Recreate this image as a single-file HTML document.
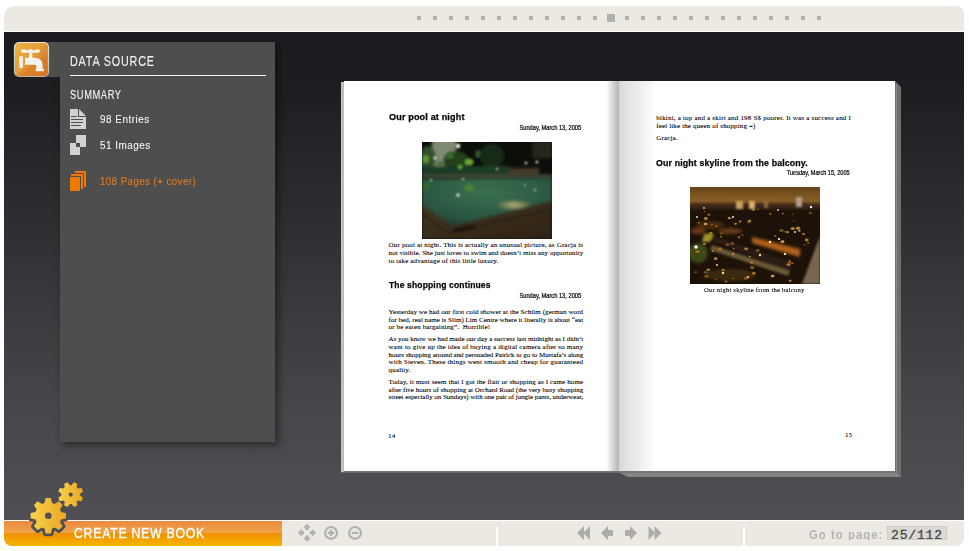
<!DOCTYPE html>
<html><head><meta charset="utf-8">
<style>
*{margin:0;padding:0;box-sizing:border-box}
html,body{width:969px;height:551px;overflow:hidden;background:#fff;font-family:"Liberation Sans",sans-serif}
.abs{position:absolute}
#topbar{left:4px;top:6px;width:960px;height:25px;background:#ece9e2;border-radius:10px 8px 0 0}
#main{left:4px;top:32px;width:960px;height:488px;background:linear-gradient(#1c1c20 0%,#1e1e22 12%,#2f2f33 40%,#45454a 75%,#504f54 100%)}
#botbar{left:4px;top:521px;width:960px;height:25px;background:#ece9e2;border-radius:0 0 8px 8px}
#orange{left:4px;top:521px;width:278px;height:25px;border-radius:0 0 0 8px;background:linear-gradient(#eb893e 0%,#f0a448 46%,#ef9002 50%,#f6b600 100%)}
.dot{position:absolute;top:16px;width:4px;height:4px;background:#b0b0b0}
#panel{left:60px;top:42px;width:215px;height:400px;background:#4e4e4e;box-shadow:3px 3px 8px rgba(0,0,0,.45)}
#paneltab{left:34px;top:42px;width:30px;height:35px;background:#4e4e4e}
#icon{left:14px;top:42px;width:35px;height:35px;border-radius:5px;border:1px solid #c9c4bd;background:linear-gradient(135deg,#e9b23c 0%,#e39634 45%,#dc7e22 55%,#d6711c 100%)}
.ptxt{position:absolute;color:#f2f2f2;white-space:nowrap;-webkit-text-stroke:0.12px currentColor}
.bl{position:absolute;white-space:nowrap}
</style></head><body>
<div id="topbar" class="abs"></div>
<div id="main" class="abs"></div>

<div id="panel" class="abs"></div>
<div id="paneltab" class="abs"></div>

<div class="ptxt" style="left:70px;top:52.5px;font-size:15.4px;line-height:15.4px;letter-spacing:1.2px;transform:scaleX(0.7);transform-origin:0 0">DATA SOURCE</div>
<div class="abs" style="left:70px;top:74.8px;width:196px;height:1.5px;background:#f4f4f4"></div>
<div class="ptxt" style="left:70px;top:88.7px;font-size:12.6px;line-height:12.6px;letter-spacing:0.8px;transform:scaleX(0.74);transform-origin:0 0">SUMMARY</div>
<div class="ptxt" style="left:100px;top:113.8px;font-size:11.8px;line-height:11.8px;letter-spacing:0.6px;transform:scaleX(0.84);transform-origin:0 0">98 Entries</div>
<div class="ptxt" style="left:100px;top:139.6px;font-size:11.8px;line-height:11.8px;letter-spacing:0.6px;transform:scaleX(0.84);transform-origin:0 0">51 Images</div>
<div class="ptxt" style="left:100px;top:175.6px;font-size:11.8px;line-height:11.8px;letter-spacing:0.6px;transform:scaleX(0.815);transform-origin:0 0;color:#e07a20">108 Pages (+ cover)</div>

<svg class="abs" style="left:0;top:0" width="969" height="551" viewBox="0 0 969 551">
 <!-- faucet -->
 <defs>
  <linearGradient id="ig" x1="0" y1="0" x2="1" y2="1"><stop offset="0" stop-color="#ebb443"/><stop offset="0.5" stop-color="#e39a36"/><stop offset="0.5" stop-color="#dc8a2c"/><stop offset="1" stop-color="#d46f1e"/></linearGradient>
  <linearGradient id="ib" x1="0" y1="0" x2="0" y2="1"><stop offset="0" stop-color="#e8e4de"/><stop offset="1" stop-color="#b9b4ae"/></linearGradient>
 </defs>
 <rect x="14.5" y="42.5" width="34" height="34" rx="4.5" fill="url(#ig)" stroke="url(#ib)" stroke-width="1.2"/>
 <path d="M15.5,70 L48,46 L48,52 L20,75.5 L15.5,75.5Z" fill="#fff" opacity="0.06"/>
 <g fill="#f3f1ee">
  <path d="M21,51 Q21,49 23,49.3 L28.5,50.2 Q30.6,47.6 32.7,50.2 L38,49.3 Q40,49 40,51 Q40,53 38,52.7 L23,52.7 Q21,53 21,51Z"/>
  <rect x="29" y="52" width="3.3" height="6.5"/>
  <path d="M25,57.8 H34.5 Q42.6,57.8 42.6,65.5 V69 H44 V71.3 H35.6 V69 H36.3 V66.2 Q36.3,64.7 34.8,64.7 H25Z"/>
  <rect x="19.3" y="56.3" width="3.6" height="11.7"/>
 </g>
<!-- entries -->
 <path fill="#d2d2d2" d="M70 109 H78 V117 H86 V129 H70 Z"/>
 <path fill="#d2d2d2" d="M79 109 L86 116 H79 Z"/>
 <g fill="#4e4e4e">
  <rect x="71" y="116" width="6" height="1"/>
  <rect x="71" y="119" width="12" height="1"/>
  <rect x="71" y="122" width="12" height="1"/>
  <rect x="71" y="125" width="10" height="1"/>
 </g>
 <!-- images -->
 <path fill="#d2d2d2" fill-rule="evenodd" d="M76 135 H86 V147 H76 Z M70 143 H80 V155 H70 Z"/>
 <rect x="76" y="143" width="4" height="4" fill="#4e4e4e"/>
 <!-- pages -->
 <g fill="#f07800">
  <rect x="70" y="177" width="10" height="14"/>
  <path d="M71 174 H83 V189 H81 V176 H71 Z"/>
  <path d="M75 171 H86 V187 H84 V173 H75 Z"/>
 </g>
</svg>
<!--TOPDOTS--><div class="dot" style="left:417px"></div><div class="dot" style="left:433px"></div><div class="dot" style="left:449px"></div><div class="dot" style="left:465px"></div><div class="dot" style="left:481px"></div><div class="dot" style="left:497px"></div><div class="dot" style="left:513px"></div><div class="dot" style="left:529px"></div><div class="dot" style="left:545px"></div><div class="dot" style="left:561px"></div><div class="dot" style="left:577px"></div><div class="dot" style="left:593px"></div><div class="dot" style="left:625px"></div><div class="dot" style="left:641px"></div><div class="dot" style="left:657px"></div><div class="dot" style="left:673px"></div><div class="dot" style="left:689px"></div><div class="dot" style="left:705px"></div><div class="dot" style="left:721px"></div><div class="dot" style="left:737px"></div><div class="dot" style="left:753px"></div><div class="dot" style="left:769px"></div><div class="dot" style="left:785px"></div><div class="dot" style="left:801px"></div><div class="dot" style="left:817px"></div><div class="dot" style="left:607px;top:14px;width:8px;height:8px"></div><!--/TOPDOTS-->
<!--BOOK--><svg class="abs" style="left:0;top:0" width="969" height="551" viewBox="0 0 969 551">
 <polygon points="895,81 901,87 901,477 895,471" fill="#6e6e6e"/>
 <polygon points="896,84 897,85 897,472 896,471" fill="#8a8a8a"/>
 <polygon points="616,471 895,471 901,477 628,477" fill="#858585"/>
 <polygon points="619,471 895,471 897,473 621,473" fill="#767676"/>
</svg>
<div class="abs" style="left:341px;top:471px;width:278px;height:2px;background:linear-gradient(#7a7a7a,#646464)"></div>
<div class="abs" style="left:341px;top:82px;width:3px;height:390px;background:linear-gradient(90deg,#c6c6c6,#b8b8b8)"></div>
<div class="abs" style="left:344px;top:81px;width:275px;height:390px;background:linear-gradient(90deg,#fff 0,#fff 262px,#dcdcdc 268px,#c2c2c2 272px,#b4b4b4 275px)"></div>
<div class="abs" style="left:619px;top:81px;width:276px;height:390px;background:linear-gradient(90deg,#d6d6d6 0,#dedede 4px,#e6e6e6 12px,#efefef 22px,#f8f8f8 31px,#fff 37px)"></div>
<svg class="abs" style="left:421.5px;top:141.8px" width="130" height="97" viewBox="0 0 130 97">
 <defs>
  <filter id="b1" x="-20%" y="-20%" width="140%" height="140%"><feGaussianBlur stdDeviation="1.5"/></filter>
  <filter id="b6" x="-20%" y="-20%" width="140%" height="140%"><feGaussianBlur stdDeviation="0.8"/></filter>
  <filter id="b2" x="-50%" y="-50%" width="200%" height="200%"><feGaussianBlur stdDeviation="0.8"/></filter>
  <radialGradient id="wg" cx="0.5" cy="0.3" r="0.8"><stop offset="0" stop-color="#3a7050"/><stop offset="0.7" stop-color="#285440"/><stop offset="1" stop-color="#1a3a2a"/></radialGradient>
  <radialGradient id="glow"><stop offset="0" stop-color="#d0c080" stop-opacity="0.9"/><stop offset="0.6" stop-color="#a09a60" stop-opacity="0.5"/><stop offset="1" stop-color="#607050" stop-opacity="0"/></radialGradient>
  <linearGradient id="dk" x1="0" y1="0" x2="1" y2="1"><stop offset="0" stop-color="#433620"/><stop offset="1" stop-color="#2e2214"/></linearGradient>
 </defs>
 <rect width="130" height="97" fill="#0c0e0a"/>
 <g filter="url(#b1)">
  <rect x="10" y="-2" width="24" height="28" fill="#7e8a72"/>
  <ellipse cx="6" cy="16" rx="8" ry="12" fill="#30502a"/>
  <ellipse cx="34" cy="19" rx="13" ry="10" fill="#24401e"/>
  <ellipse cx="70" cy="14" rx="12" ry="12" fill="#182a14"/>
  <rect x="110" y="0" width="20" height="16" fill="#26261e"/>
  <rect x="0" y="24" width="87" height="9" fill="#1e3a26"/>
  <rect x="87" y="26" width="30" height="7" fill="#45382a"/>
  <rect x="0" y="32" width="130" height="5" fill="#3e4230"/>
 </g>
 <g filter="url(#b6)">
  <ellipse cx="4" cy="17" rx="3" ry="4" fill="#5a9a36"/>
  <ellipse cx="47" cy="20" rx="4.5" ry="3.5" fill="#64a634"/>
  <ellipse cx="38" cy="25" rx="2.5" ry="2.5" fill="#5aa036"/>
  <ellipse cx="28" cy="14" rx="4" ry="3" fill="#3c6a2c"/>
  <ellipse cx="56" cy="12" rx="3" ry="4" fill="#2e5426"/>
  <ellipse cx="18" cy="22" rx="3" ry="2" fill="#3a6a2a"/>
 </g>
 <g filter="url(#b1)">
  <polygon points="0,37 130,36 130,59 31,84 0,63" fill="url(#wg)"/>
  <ellipse cx="47" cy="46" rx="5" ry="3.5" fill="#4e8a34" opacity="0.85"/><ellipse cx="4" cy="44" rx="4" ry="4" fill="#3a6a30" opacity="0.8"/><ellipse cx="60" cy="40" rx="30" ry="3" fill="#3a6a40" opacity="0.5"/>
  <ellipse cx="92" cy="63" rx="20" ry="6" fill="url(#glow)"/>
  <polygon points="0,63 31,84 130,59 130,97 0,97" fill="url(#dk)"/>
  <polygon points="0,71 27,90 130,66 130,68 28,93 0,74" fill="#241a0e" opacity="0.6"/>
 </g>
 <g fill="#fffbe8" filter="url(#b2)">
  <circle cx="36" cy="4" r="2.3"/><circle cx="13" cy="16" r="1.5"/><circle cx="36" cy="53" r="1.6"/>
  <circle cx="104" cy="21" r="1.2"/><circle cx="115" cy="20" r="1.3"/><circle cx="75" cy="27" r="1"/><circle cx="9" cy="38" r="1"/><circle cx="41" cy="37" r="1"/><circle cx="103" cy="43" r="0.8"/><circle cx="113" cy="48" r="0.9"/>
 </g>
 <g fill="#1a140c" filter="url(#b2)"><rect x="31" y="85" width="22" height="3" transform="rotate(-12 42 86)"/></g>
</svg>
<svg class="abs" style="left:690.2px;top:187px" width="130" height="97" viewBox="0 0 130 97">
 <defs>
  <filter id="b3" x="-20%" y="-20%" width="140%" height="140%"><feGaussianBlur stdDeviation="1.6"/></filter>
  <filter id="b5" x="-20%" y="-20%" width="140%" height="140%"><feGaussianBlur stdDeviation="1.1"/></filter>
  <filter id="b4" x="-50%" y="-50%" width="200%" height="200%"><feGaussianBlur stdDeviation="0.7"/></filter>
  <linearGradient id="sky" x1="0" y1="0" x2="0" y2="1"><stop offset="0" stop-color="#664519"/><stop offset="0.7" stop-color="#8a5e24"/><stop offset="1" stop-color="#3a2812"/></linearGradient>
 </defs>
 <rect width="130" height="97" fill="#1c1208"/>
 <rect width="130" height="20" fill="url(#sky)"/>
 <g filter="url(#b3)">
  <rect x="0" y="17" width="130" height="5" fill="#3a2812"/>
  <ellipse cx="20" cy="38" rx="14" ry="4" fill="#4a2a10"/>
  <ellipse cx="40" cy="44" rx="12" ry="3" fill="#6a3a12"/>
  <ellipse cx="8" cy="44" rx="8" ry="3" fill="#6a3812"/>
  <polygon points="62,50 110,62 110,70 62,56" fill="#b0601c"/>
  <ellipse cx="8" cy="66" rx="10" ry="10" fill="#3e4a18"/>
  <ellipse cx="40" cy="88" rx="26" ry="6" fill="#3a2a10"/>
 </g>
 <g filter="url(#b5)">
  <rect x="46" y="14" width="7" height="8" fill="#c8a060"/>
  <rect x="59" y="14" width="6" height="8" fill="#d8b070"/>
  <rect x="74" y="12" width="4" height="9" fill="#8a6a3a"/>
  <rect x="106" y="10" width="6" height="10" fill="#b0a090"/>
  <polygon points="13,50 24,49 105,76 100,84" fill="#2a1a12"/>
  <polygon points="22,58 100,84 98,89 20,63" fill="#6a5a34"/>
  <polygon points="14,47 24,46 20,55 12,55" fill="#a0902a"/>
  <polygon points="130,49 130,97 112,97" fill="#7a6650"/>
 </g>
 <g filter="url(#b4)" opacity="0.8"><ellipse cx="40.5" cy="31.5" rx="0.9" ry="0.6" fill="#f0c060"/><ellipse cx="102.7" cy="27.2" rx="0.9" ry="0.7" fill="#806030"/><ellipse cx="63.4" cy="22.8" rx="1.4" ry="1.0" fill="#d0a040"/><ellipse cx="30.1" cy="61.9" rx="2.0" ry="1.4" fill="#c07020"/><ellipse cx="15.5" cy="37.0" rx="1.7" ry="1.2" fill="#f0c060"/><ellipse cx="7.7" cy="64.5" rx="2.2" ry="1.6" fill="#c07020"/><ellipse cx="5.8" cy="85.2" rx="1.4" ry="1.0" fill="#a05a18"/><ellipse cx="67.6" cy="63.4" rx="2.0" ry="1.4" fill="#806030"/><ellipse cx="22.6" cy="64.2" rx="1.1" ry="0.8" fill="#f0c060"/><ellipse cx="12.2" cy="74.1" rx="0.9" ry="0.7" fill="#806030"/><ellipse cx="25.7" cy="71.7" rx="1.9" ry="1.4" fill="#d0a040"/><ellipse cx="58.2" cy="90.2" rx="1.3" ry="0.9" fill="#a05a18"/><ellipse cx="99.3" cy="73.1" rx="1.0" ry="0.7" fill="#e09030"/><ellipse cx="37.5" cy="57.6" rx="1.9" ry="1.3" fill="#a05a18"/><ellipse cx="36.0" cy="94.5" rx="1.6" ry="1.1" fill="#c07020"/><ellipse cx="20.6" cy="46.0" rx="1.4" ry="1.0" fill="#d0a040"/><ellipse cx="120.3" cy="25.9" rx="1.6" ry="1.2" fill="#806030"/><ellipse cx="109.4" cy="43.8" rx="1.3" ry="1.0" fill="#f0c060"/><ellipse cx="62.1" cy="80.6" rx="2.0" ry="1.4" fill="#c07020"/><ellipse cx="118.1" cy="56.0" rx="0.9" ry="0.7" fill="#f0c060"/><ellipse cx="91.4" cy="43.5" rx="2.2" ry="1.6" fill="#806030"/><ellipse cx="102.7" cy="41.6" rx="2.1" ry="1.5" fill="#d0a040"/><ellipse cx="43.4" cy="91.5" rx="1.1" ry="0.8" fill="#a05a18"/><ellipse cx="14.6" cy="24.5" rx="1.0" ry="0.7" fill="#a05a18"/><ellipse cx="31.0" cy="49.7" rx="1.0" ry="0.7" fill="#d0a040"/><ellipse cx="56.1" cy="61.8" rx="2.0" ry="1.4" fill="#e09030"/><ellipse cx="108.0" cy="41.2" rx="2.2" ry="1.6" fill="#d0a040"/><ellipse cx="85.3" cy="48.9" rx="1.1" ry="0.8" fill="#e09030"/><ellipse cx="22.0" cy="37.6" rx="0.9" ry="0.6" fill="#e09030"/><ellipse cx="103.9" cy="33.9" rx="0.8" ry="0.6" fill="#a05a18"/><ellipse cx="52.4" cy="48.1" rx="1.3" ry="0.9" fill="#806030"/><ellipse cx="15.7" cy="85.3" rx="1.8" ry="1.3" fill="#806030"/><ellipse cx="92.5" cy="54.7" rx="2.0" ry="1.4" fill="#f0c060"/><ellipse cx="49.0" cy="50.3" rx="1.5" ry="1.1" fill="#c07020"/><ellipse cx="50.1" cy="34.5" rx="1.5" ry="1.0" fill="#e09030"/><ellipse cx="13.7" cy="65.7" rx="0.8" ry="0.6" fill="#c07020"/><ellipse cx="18.9" cy="27.7" rx="1.7" ry="1.2" fill="#a05a18"/><ellipse cx="8.8" cy="35.8" rx="1.0" ry="0.7" fill="#d0a040"/><ellipse cx="31.5" cy="46.4" rx="1.5" ry="1.1" fill="#a05a18"/><ellipse cx="14.4" cy="57.1" rx="1.5" ry="1.1" fill="#d0a040"/><ellipse cx="39.0" cy="31.0" rx="1.3" ry="0.9" fill="#f0c060"/><ellipse cx="33.1" cy="83.0" rx="1.6" ry="1.1" fill="#e09030"/><ellipse cx="25.7" cy="92.4" rx="1.0" ry="0.7" fill="#a05a18"/><ellipse cx="67.9" cy="22.1" rx="1.3" ry="0.9" fill="#806030"/><ellipse cx="80.4" cy="26.9" rx="1.6" ry="1.1" fill="#a05a18"/><ellipse cx="113.5" cy="47.0" rx="1.6" ry="1.1" fill="#e09030"/><ellipse cx="97.4" cy="45.1" rx="1.7" ry="1.2" fill="#e09030"/><ellipse cx="98.5" cy="77.6" rx="2.0" ry="1.4" fill="#e09030"/><ellipse cx="102.3" cy="76.2" rx="1.1" ry="0.8" fill="#e09030"/><ellipse cx="61.6" cy="75.6" rx="1.9" ry="1.4" fill="#c07020"/><ellipse cx="59.0" cy="34.7" rx="2.2" ry="1.6" fill="#806030"/><ellipse cx="55.9" cy="91.2" rx="2.2" ry="1.6" fill="#a05a18"/><ellipse cx="45.6" cy="36.8" rx="1.5" ry="1.1" fill="#e09030"/><ellipse cx="42.2" cy="56.7" rx="2.0" ry="1.4" fill="#806030"/><ellipse cx="59.9" cy="69.6" rx="1.0" ry="0.7" fill="#f0c060"/><ellipse cx="82.6" cy="89.1" rx="1.9" ry="1.4" fill="#f0c060"/><ellipse cx="59.8" cy="33.6" rx="1.3" ry="0.9" fill="#f0c060"/><ellipse cx="100.1" cy="93.8" rx="1.5" ry="1.1" fill="#d0a040"/><ellipse cx="92.9" cy="26.5" rx="1.1" ry="0.8" fill="#e09030"/><ellipse cx="15.9" cy="31.5" rx="2.0" ry="1.4" fill="#d0a040"/><ellipse cx="18.3" cy="82.8" rx="1.8" ry="1.3" fill="#d0a040"/><ellipse cx="43.8" cy="61.7" rx="0.9" ry="0.6" fill="#e09030"/><ellipse cx="99.9" cy="75.2" rx="1.6" ry="1.1" fill="#c07020"/><ellipse cx="116.7" cy="53.0" rx="2.0" ry="1.4" fill="#e09030"/><ellipse cx="26.4" cy="39.1" rx="1.5" ry="1.1" fill="#a05a18"/><ellipse cx="95.5" cy="44.8" rx="1.4" ry="1.0" fill="#806030"/><ellipse cx="16.4" cy="89.2" rx="2.1" ry="1.5" fill="#a05a18"/><ellipse cx="82.8" cy="81.9" rx="1.4" ry="1.0" fill="#806030"/><ellipse cx="114.7" cy="58.1" rx="1.1" ry="0.8" fill="#806030"/><ellipse cx="63.8" cy="86.3" rx="1.7" ry="1.2" fill="#e09030"/></g>
<g fill="#ffd890" filter="url(#b4)">
  <circle cx="6" cy="60" r="1.8" fill="#fff"/><circle cx="43" cy="30" r="1.1"/><circle cx="70" cy="68" r="1.2"/><circle cx="95" cy="67" r="1.2"/>
  <circle cx="7" cy="30" r="1" fill="#ddd"/><circle cx="14" cy="21" r="0.9" fill="#ccd"/><circle cx="80" cy="55" r="1.3"/><circle cx="89" cy="52" r="1.1" fill="#fff"/><circle cx="105" cy="45" r="1" fill="#dde"/><circle cx="121" cy="20" r="1.2" fill="#eef"/><circle cx="88" cy="23" r="1" fill="#ccd"/>
  <circle cx="43" cy="67" r="1.2" fill="#e07060"/><circle cx="27" cy="78" r="1"/><circle cx="33" cy="86" r="1.2"/><circle cx="58" cy="90" r="1"/>
 </g>
</svg>
<div class="bl" style="top:112.34px;font:bold 9.4px/9.4px 'Liberation Sans';color:#000;left:388.60px;letter-spacing:0.150px;transform:scaleX(0.9678);transform-origin:0 0;-webkit-text-stroke:0.25px #000;">Our pool at night</div>
<div class="bl" style="top:241.90px;font:normal 7.05px/7.05px 'Liberation Serif';color:#000;left:388.60px;letter-spacing:0.147px;-webkit-text-stroke:0.08px #000;">Our pool at night. This is actually an unusual picture, as Gracja is</div>
<div class="bl" style="top:249.70px;font:normal 7.05px/7.05px 'Liberation Serif';color:#000;left:388.60px;letter-spacing:0.037px;-webkit-text-stroke:0.08px #000;">not visible. She just loves to swim and doesn’t miss any opportunity</div>
<div class="bl" style="top:257.50px;font:normal 7.05px/7.05px 'Liberation Serif';color:#000;left:388.60px;letter-spacing:0.120px;-webkit-text-stroke:0.08px #000;">to take advantage of this little luxury.</div>
<div class="bl" style="top:280.04px;font:bold 9.4px/9.4px 'Liberation Sans';color:#000;left:388.60px;letter-spacing:0.150px;transform:scaleX(0.9104);transform-origin:0 0;-webkit-text-stroke:0.25px #000;">The shopping continues</div>
<div class="bl" style="top:309.30px;font:normal 7.05px/7.05px 'Liberation Serif';color:#000;left:388.60px;letter-spacing:0.063px;-webkit-text-stroke:0.08px #000;">Yesterday we had our first cold shower at the Schlim (german word</div>
<div class="bl" style="top:316.80px;font:normal 7.05px/7.05px 'Liberation Serif';color:#000;left:388.60px;letter-spacing:0.001px;-webkit-text-stroke:0.08px #000;">for bed, real name is Slim) Lim Centre where it literally is about “eat</div>
<div class="bl" style="top:324.40px;font:normal 7.05px/7.05px 'Liberation Serif';color:#000;left:388.60px;letter-spacing:0.120px;-webkit-text-stroke:0.08px #000;">or be eaten bargaining”. &nbsp;Horrible!</div>
<div class="bl" style="top:336.20px;font:normal 7.05px/7.05px 'Liberation Serif';color:#000;left:388.60px;letter-spacing:-0.026px;-webkit-text-stroke:0.08px #000;">As you know we had made our day a success last midnight as I didn’t</div>
<div class="bl" style="top:344.00px;font:normal 7.05px/7.05px 'Liberation Serif';color:#000;left:388.60px;letter-spacing:0.173px;-webkit-text-stroke:0.08px #000;">want to give up the idea of buying a digital camera after so many</div>
<div class="bl" style="top:351.60px;font:normal 7.05px/7.05px 'Liberation Serif';color:#000;left:388.60px;letter-spacing:-0.062px;-webkit-text-stroke:0.08px #000;">hours shopping around and persuaded Patrick to go to Mustafa’s along</div>
<div class="bl" style="top:359.40px;font:normal 7.05px/7.05px 'Liberation Serif';color:#000;left:388.60px;letter-spacing:0.180px;-webkit-text-stroke:0.08px #000;">with Steven. These things went smooth and cheap for guaranteed</div>
<div class="bl" style="top:367.10px;font:normal 7.05px/7.05px 'Liberation Serif';color:#000;left:388.60px;letter-spacing:0.120px;-webkit-text-stroke:0.08px #000;">quality.</div>
<div class="bl" style="top:379.20px;font:normal 7.05px/7.05px 'Liberation Serif';color:#000;left:388.60px;letter-spacing:0.094px;-webkit-text-stroke:0.08px #000;">Today, it must seem that I got the flair or shopping as I came home</div>
<div class="bl" style="top:386.70px;font:normal 7.05px/7.05px 'Liberation Serif';color:#000;left:388.60px;letter-spacing:-0.025px;-webkit-text-stroke:0.08px #000;">after five hours of shopping at Orchard Road (the very busy shopping</div>
<div class="bl" style="top:394.30px;font:normal 7.05px/7.05px 'Liberation Serif';color:#000;left:388.60px;letter-spacing:-0.067px;-webkit-text-stroke:0.08px #000;">street especially on Sundays) with one pair of jungle pants, underwear,</div>
<div class="bl" style="top:432.50px;font:normal 7.05px/7.05px 'Liberation Serif';color:#000;left:388.00px;letter-spacing:0.120px;-webkit-text-stroke:0.08px #000;">14</div>
<div class="bl" style="top:114.90px;font:normal 7.05px/7.05px 'Liberation Serif';color:#000;left:656.30px;letter-spacing:0.181px;-webkit-text-stroke:0.08px #000;">bikini, a top and a skirt and 198 S$ poorer. It was a success and I</div>
<div class="bl" style="top:122.60px;font:normal 7.05px/7.05px 'Liberation Serif';color:#000;left:656.30px;letter-spacing:0.120px;-webkit-text-stroke:0.08px #000;">feel like the queen of shopping =)</div>
<div class="bl" style="top:134.90px;font:normal 7.05px/7.05px 'Liberation Serif';color:#000;left:656.30px;letter-spacing:0.120px;-webkit-text-stroke:0.08px #000;">Gracja.</div>
<div class="bl" style="top:158.34px;font:bold 9.4px/9.4px 'Liberation Sans';color:#000;left:656.30px;letter-spacing:0.150px;transform:scaleX(0.9380);transform-origin:0 0;-webkit-text-stroke:0.25px #000;">Our night skyline from the balcony.</div>
<div class="bl" style="top:286.90px;font:normal 7.05px/7.05px 'Liberation Serif';color:#000;left:704.40px;letter-spacing:0.200px;transform:scaleX(0.9477);transform-origin:0 0;-webkit-text-stroke:0.08px #000;">Our night skyline from the balcony</div>
<div class="bl" style="top:431.90px;font:normal 7.05px/7.05px 'Liberation Serif';color:#000;left:845.00px;letter-spacing:0.120px;-webkit-text-stroke:0.08px #000;">15</div>
<div class="bl" style="top:124.97px;font:normal 6.3px/6.3px 'Liberation Sans';color:#000;right:388.30px;transform:scaleX(0.9053);transform-origin:100% 0;-webkit-text-stroke:0.2px #000;">Sunday, March 13, 2005</div>
<div class="bl" style="top:292.97px;font:normal 6.3px/6.3px 'Liberation Sans';color:#000;right:388.30px;transform:scaleX(0.9053);transform-origin:100% 0;-webkit-text-stroke:0.2px #000;">Sunday, March 13, 2005</div>
<div class="bl" style="top:169.97px;font:normal 6.3px/6.3px 'Liberation Sans';color:#000;right:119.00px;transform:scaleX(0.8909);transform-origin:100% 0;-webkit-text-stroke:0.2px #000;">Tuesday, March 15, 2005</div>
<!--/BOOK-->
<div id="botbar" class="abs"></div>
<div id="orange" class="abs"></div>
<!--BOTTOM-->
<div class="abs" style="left:4px;top:520px;width:278px;height:1px;background:#fff"></div>
<div class="ptxt" style="left:74.2px;top:525.3px;font-size:15.4px;line-height:15.4px;color:#fff;letter-spacing:0.9px;transform:scaleX(0.8);-webkit-text-stroke:0.35px #fff;transform-origin:0 0">CREATE NEW BOOK</div>
<svg class="abs" style="left:0;top:470px" width="110" height="80" viewBox="0 470 110 80">
 <defs>
  <linearGradient id="gg" x1="0" y1="0" x2="1" y2="0"><stop offset="0" stop-color="#f7d24a"/><stop offset="1" stop-color="#eaa623"/></linearGradient>
 </defs>
 <path d="M52.08,502.95L50.95,498.00L45.65,498.00L44.52,502.95L41.95,504.01L37.65,501.31L33.91,505.05L36.61,509.35L35.55,511.92L30.60,513.05L30.60,518.35L35.55,519.48L36.61,522.05L33.91,526.35L37.65,530.09L41.95,527.39L44.52,528.45L45.65,533.40L50.95,533.40L52.08,528.45L54.65,527.39L58.95,530.09L62.69,526.35L59.99,522.05L61.05,519.48L66.00,518.35L66.00,513.05L61.05,511.92L59.99,509.35L62.69,505.05L58.95,501.31L54.65,504.01Z" fill="#4f4e53" stroke="#4f4e53" stroke-width="5.5" stroke-linejoin="round"/>
 <path d="M52.08,502.95L50.95,498.00L45.65,498.00L44.52,502.95L41.95,504.01L37.65,501.31L33.91,505.05L36.61,509.35L35.55,511.92L30.60,513.05L30.60,518.35L35.55,519.48L36.61,522.05L33.91,526.35L37.65,530.09L41.95,527.39L44.52,528.45L45.65,533.40L50.95,533.40L52.08,528.45L54.65,527.39L58.95,530.09L62.69,526.35L59.99,522.05L61.05,519.48L66.00,518.35L66.00,513.05L61.05,511.92L59.99,509.35L62.69,505.05L58.95,501.31L54.65,504.01Z M48.3,512.4 A3.3,3.3 0 1 0 48.3,519 A3.3,3.3 0 1 0 48.3,512.4 Z" fill="url(#gg)" fill-rule="evenodd"/>
 <path d="M69.80,485.24L67.63,482.28L64.16,483.71L64.72,487.35L63.45,488.62L59.81,488.06L58.38,491.53L61.34,493.70L61.34,495.50L58.38,497.67L59.81,501.14L63.45,500.58L64.72,501.85L64.16,505.49L67.63,506.92L69.80,503.96L71.60,503.96L73.77,506.92L77.24,505.49L76.68,501.85L77.95,500.58L81.59,501.14L83.02,497.67L80.06,495.50L80.06,493.70L83.02,491.53L81.59,488.06L77.95,488.62L76.68,487.35L77.24,483.71L73.77,482.28L71.60,485.24Z M70.7,492.5 A2.1,2.1 0 1 0 70.7,496.7 A2.1,2.1 0 1 0 70.7,492.5 Z" fill="url(#gg)" fill-rule="evenodd"/>
</svg>
<svg class="abs" style="left:270px;top:515px" width="120" height="36" viewBox="270 515 120 36">
 <g fill="#b0b0b0">
  <polygon points="307,523.8 311,527.8 303,527.8"/>
  <path d="M305.25,527.5 H308.75 V529.6 Q307,531.2 305.25,529.6Z"/>
  <polygon points="307,541.8 311,537.8 303,537.8"/>
  <path d="M305.25,538.1 H308.75 V536 Q307,534.4 305.25,536Z"/>
  <polygon points="297.8,532.8 301.8,528.8 301.8,536.8"/>
  <path d="M301.5,531.05 V534.55 H303.6 Q305.2,532.8 303.6,531.05Z"/>
  <polygon points="316.2,532.8 312.2,528.8 312.2,536.8"/>
  <path d="M312.5,531.05 V534.55 H310.4 Q308.8,532.8 310.4,531.05Z"/>
 </g>
 <g fill="none" stroke="#b0b0b0" stroke-width="2.1">
  <circle cx="331" cy="532.9" r="5.95"/>
  <circle cx="355" cy="532.9" r="5.95"/>
 </g>
 <g fill="#b0b0b0">
  <rect x="327.7" y="531.8" width="6.6" height="2.2"/><rect x="329.9" y="529.7" width="2.2" height="6.4"/>
  <rect x="351.7" y="531.8" width="6.6" height="2.2"/>
 </g>
</svg>
<div class="abs" style="left:496px;top:527px;width:1.5px;height:19px;background:#fff"></div>
<div class="abs" style="left:743px;top:527px;width:1.5px;height:19px;background:#fff"></div>
<svg class="abs" style="left:570px;top:520px" width="100" height="26" viewBox="570 520 100 26">
 <g fill="#acacac">
  <polygon points="577,533 584,526 584,540"/>
  <polygon points="583.3,533 590,526 590,540"/>
  <polygon points="601,533 608,526 608,530 613,530 613,536 608,536 608,540"/>
  <polygon points="637,533 630,526 630,530 625,530 625,536 630,536 630,540"/>
  <polygon points="661.5,533 654.5,526 654.5,540"/>
  <polygon points="655.2,533 648.5,526 648.5,540"/>
 </g>
</svg>
<div class="abs" style="left:805px;top:520px;width:80px;height:19.6px;overflow:hidden"><div class="ptxt" style="left:4px;top:8.4px;font-weight:bold;font-size:13.2px;line-height:13.2px;color:#b4b4b4;letter-spacing:1.2px;transform:scaleX(0.86);transform-origin:0 0;-webkit-text-stroke:0">Go to page:</div></div>
<div class="abs" style="left:887px;top:526px;width:60px;height:14px;background:#dbd9d4;border:1px solid #cfcdc8;overflow:hidden">
 <div style="position:absolute;left:3px;top:1.6px;font:13px/13px 'Liberation Mono';color:#454545;letter-spacing:0.85px;-webkit-text-stroke:0.3px #454545">25/112</div>
</div>
<!--/BOTTOM-->
</body></html>
